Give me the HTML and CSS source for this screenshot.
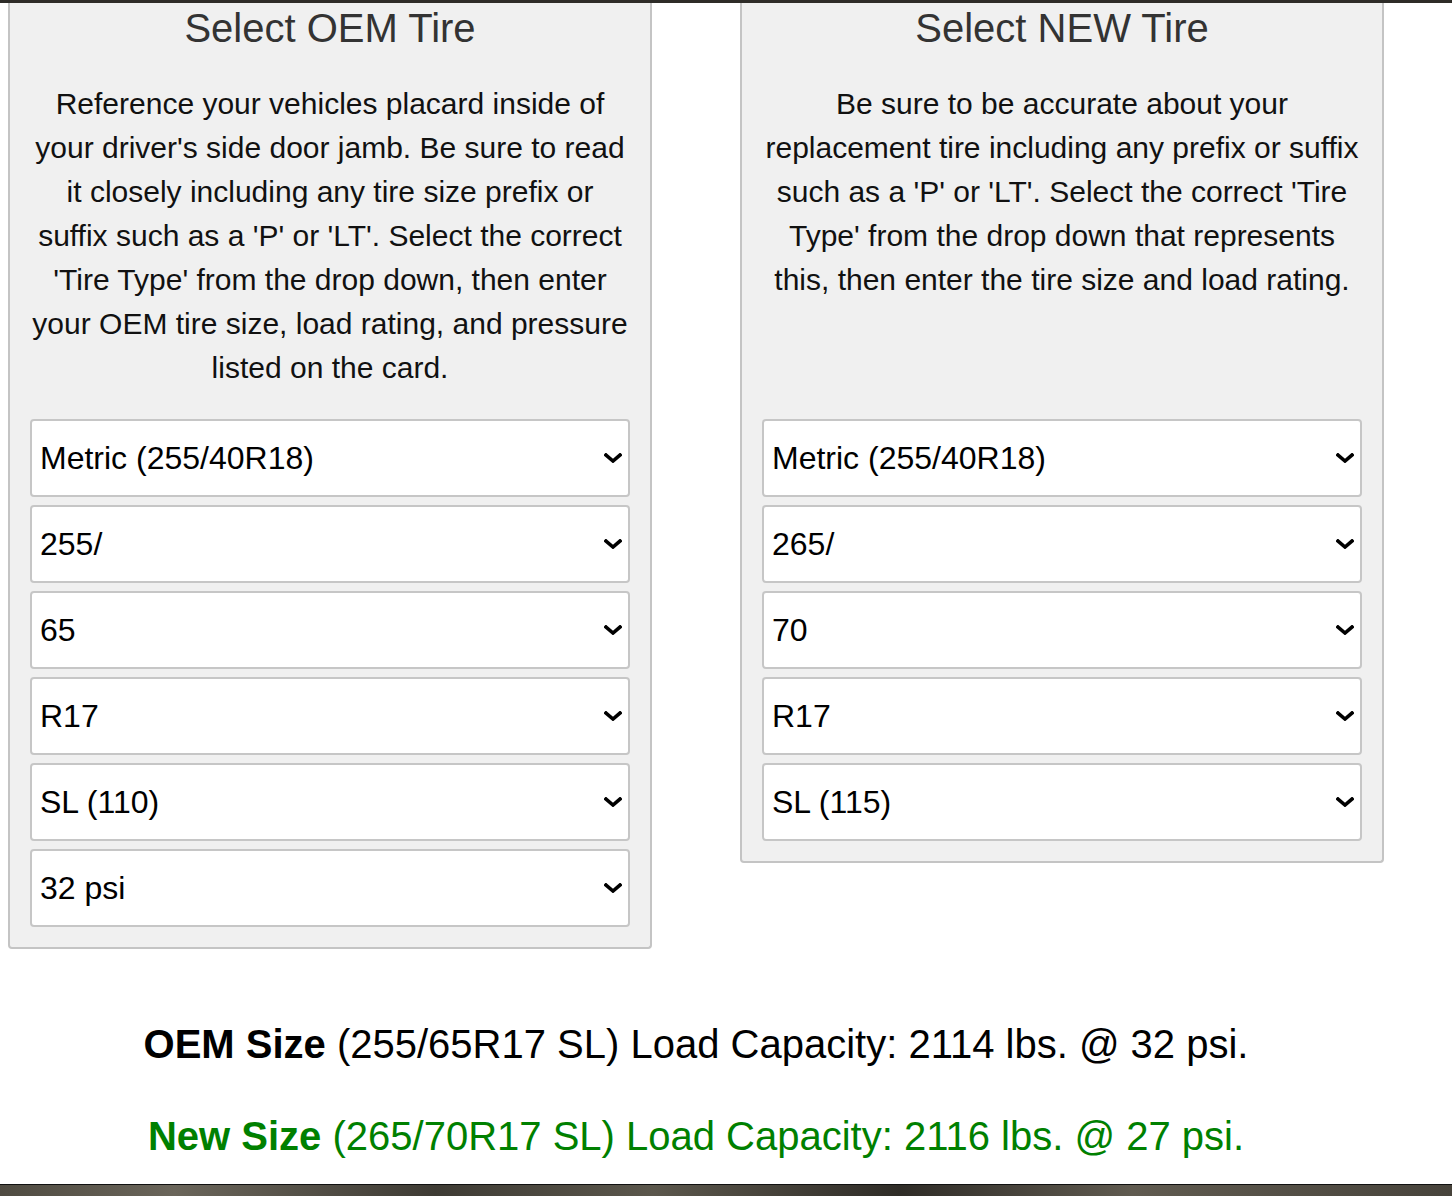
FILE: index.html
```html
<!DOCTYPE html>
<html lang="en">
<head>
    <meta charset="UTF-8">
    <meta name="viewport" content="width=device-width, initial-scale=1.0">
    <title>Tire Load Calculator</title>
    <link rel="stylesheet" href="styles.css">
</head>
<body>
    <div class="top-bar"></div>

    <div class="calculator">
        <div class="tire-columns">
            <!-- OEM tire -->
            <div class="tire-box">
                <h2>Select OEM Tire</h2>
                <p class="help-text">Reference your vehicles placard inside of your driver's side door jamb. Be sure to read it closely including any tire size prefix or suffix such as a 'P' or 'LT'. Select the correct 'Tire Type' from the drop down, then enter your OEM tire size, load rating, and pressure listed on the card.</p>
                <div class="select-list">
                    <div class="select-wrap">
                        <select><option>Metric (255/40R18)</option></select>
                        <svg class="chevron" viewBox="0 0 18 10"><polyline points="2,2 9,8 16,2"/></svg>
                    </div>
                    <div class="select-wrap">
                        <select><option>255/</option></select>
                        <svg class="chevron" viewBox="0 0 18 10"><polyline points="2,2 9,8 16,2"/></svg>
                    </div>
                    <div class="select-wrap">
                        <select><option>65</option></select>
                        <svg class="chevron" viewBox="0 0 18 10"><polyline points="2,2 9,8 16,2"/></svg>
                    </div>
                    <div class="select-wrap">
                        <select><option>R17</option></select>
                        <svg class="chevron" viewBox="0 0 18 10"><polyline points="2,2 9,8 16,2"/></svg>
                    </div>
                    <div class="select-wrap">
                        <select><option>SL (110)</option></select>
                        <svg class="chevron" viewBox="0 0 18 10"><polyline points="2,2 9,8 16,2"/></svg>
                    </div>
                    <div class="select-wrap">
                        <select><option>32 psi</option></select>
                        <svg class="chevron" viewBox="0 0 18 10"><polyline points="2,2 9,8 16,2"/></svg>
                    </div>
                </div>
            </div>

            <!-- New tire -->
            <div class="tire-box">
                <h2>Select NEW Tire</h2>
                <p class="help-text">Be sure to be accurate about your replacement tire including any prefix or suffix such as a 'P' or 'LT'. Select the correct 'Tire Type' from the drop down that represents this, then enter the tire size and load rating.</p>
                <div class="select-list">
                    <div class="select-wrap">
                        <select><option>Metric (255/40R18)</option></select>
                        <svg class="chevron" viewBox="0 0 18 10"><polyline points="2,2 9,8 16,2"/></svg>
                    </div>
                    <div class="select-wrap">
                        <select><option>265/</option></select>
                        <svg class="chevron" viewBox="0 0 18 10"><polyline points="2,2 9,8 16,2"/></svg>
                    </div>
                    <div class="select-wrap">
                        <select><option>70</option></select>
                        <svg class="chevron" viewBox="0 0 18 10"><polyline points="2,2 9,8 16,2"/></svg>
                    </div>
                    <div class="select-wrap">
                        <select><option>R17</option></select>
                        <svg class="chevron" viewBox="0 0 18 10"><polyline points="2,2 9,8 16,2"/></svg>
                    </div>
                    <div class="select-wrap">
                        <select><option>SL (115)</option></select>
                        <svg class="chevron" viewBox="0 0 18 10"><polyline points="2,2 9,8 16,2"/></svg>
                    </div>
                </div>
            </div>
        </div>

        <!-- Results -->
        <div class="results">
            <p class="result oem"><b>OEM Size</b> (255/65R17 SL) Load Capacity: 2114 lbs. @ 32 psi.</p>
            <p class="result new"><b>New Size</b> (265/70R17 SL) Load Capacity: 2116 lbs. @ 27 psi.</p>
        </div>
    </div>

    <div class="footer-band"></div>
</body>
</html>
```

FILE: styles.css
```css
body {
    margin: 0;
    background: white;
    font-family: "Liberation Sans", Arial, Helvetica, sans-serif;
    overflow: hidden;
}

.top-bar {
    height: 3px;
    background: #2e2c28;
}

.calculator {
    width: 1376px;
    margin-left: 8px;
}

.tire-columns {
    display: flex;
    align-items: flex-start;
    gap: 88px;
}

.tire-box {
    width: 644px;
    box-sizing: border-box;
    background: #f0f0f0;
    border: 2px solid #c4c4c4;
    border-top: none;
    border-radius: 0 0 4px 4px;
    padding: 2px 20px 20px;
    text-align: center;
}

.tire-box h2 {
    margin: 0;
    font-size: 40px;
    line-height: 46px;
    font-weight: normal;
    color: #333;
}

.help-text {
    margin: 31px 0 29px;
    min-height: 308px;
    font-size: 30px;
    line-height: 44px;
    color: #111;
}

.select-list {
    display: flex;
    flex-direction: column;
    gap: 8px;
}

.select-wrap {
    position: relative;
}

.select-wrap select {
    display: block;
    width: 100%;
    height: 78px;
    box-sizing: border-box;
    appearance: none;
    -webkit-appearance: none;
    background: white;
    border: 2px solid #c6c6c6;
    border-radius: 4px;
    padding: 0 40px 0 8px;
    font-family: inherit;
    font-size: 32px;
    color: black;
}

/* drop down arrow */
.chevron {
    position: absolute;
    right: 8px;
    top: 50%;
    width: 18px;
    height: 10px;
    transform: translateY(-50%);
    pointer-events: none;
}
.chevron polyline {
    fill: none;
    stroke: black;
    stroke-width: 3.6;
    stroke-linecap: square;
}

.results {
    display: flex;
    flex-direction: column;
    gap: 46px;
    margin: 72px 0 25px;
    text-align: center;
}

.result {
    margin: 0;
    font-size: 40px;
    line-height: 46px;
}
.result.oem { color: black; }
.result.new { color: #008000; }

.footer-band {
    height: 40px;
    border-top: 1px solid #111;
    background:
        linear-gradient(90deg, #4f4b41 0%, #6a655a 12%, #3e3b34 30%, #5b574c 45%, #2f2c27 62%, #605b50 78%, #47433b 100%);
}
```
